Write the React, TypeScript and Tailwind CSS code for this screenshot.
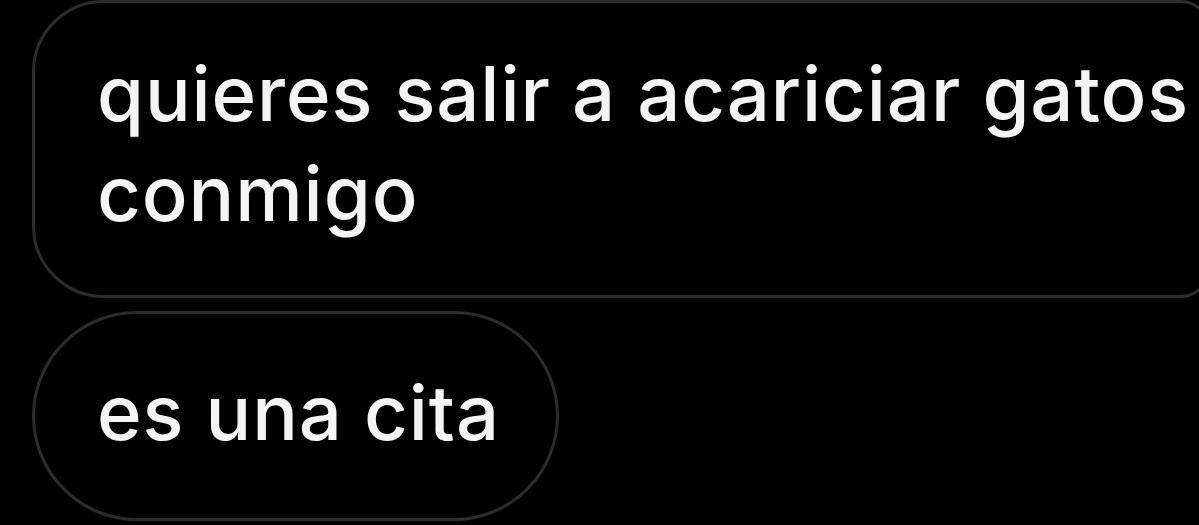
export default function App() {
  return (
    <div
      className="h-[525px] w-full overflow-hidden bg-black pl-[32px]"
      style={{ fontFamily: "Inter, Roboto, 'Liberation Sans', sans-serif" }}
    >
      <div className="mr-[-10px] h-[298px] rounded-l-[72px] rounded-r-[28px] border-[3px] border-[#2c2c2c] pl-[62px] pt-[40px] text-[76px] leading-[100px] font-medium tracking-[0.9px] text-[#f4f4f4]">
        quieres salir a acariciar gatos
        <br />
        conmigo
      </div>
      <div className="mt-[13px] flex h-[210px] w-[527px] items-center rounded-full border-[3px] border-[#2c2c2c] pb-[8px] pl-[62px] text-[76px] leading-[100px] font-medium tracking-[0.9px] text-[#f4f4f4]">
        es una cita
      </div>
    </div>
  );
}
